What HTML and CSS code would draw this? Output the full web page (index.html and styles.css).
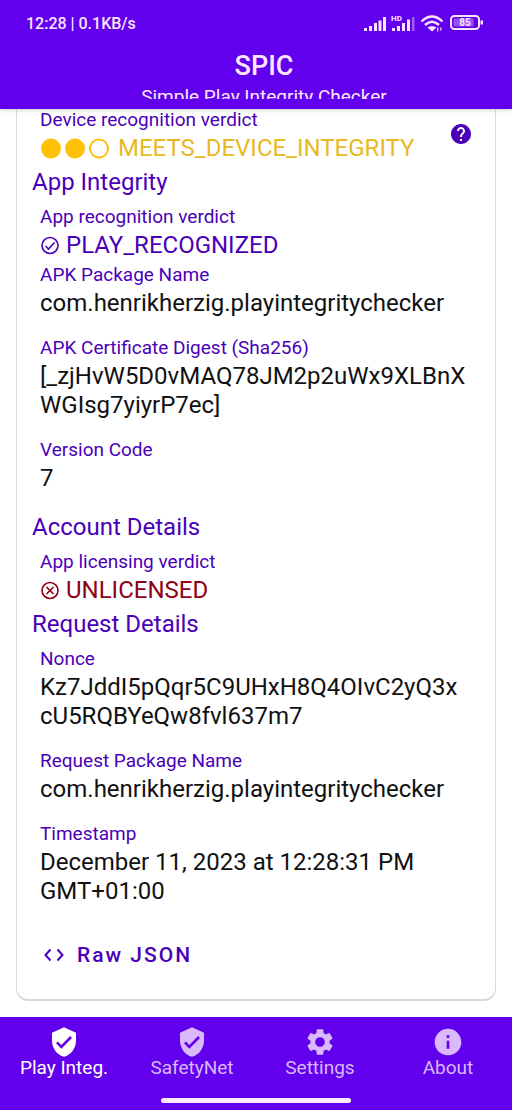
FILE: index.html
```html
<!DOCTYPE html>
<html lang="en">
<head>
<meta charset="utf-8">
<meta name="viewport" content="width=device-width, initial-scale=1">
<title>SPIC</title>
<link rel="stylesheet" href="styles.css">
</head>
<body>
<header class="top">
  <div class="status">
    <span>12:28 | 0.1KB/s</span>
    <svg class="status-icons" width="120" height="20" viewBox="0 0 120 20" fill="currentColor" role="img" aria-label="Signal, HD, Wi-Fi, battery 85%">
      <path d="M0 15h3v3h-3zM5 13h3v5h-3zM10 10h3v8h-3zM14.500 7.500h3v10.500h-3zM19 4h3v14h-3z"/>
      <path d="M28 15h3v3h-3zM33 13h3v5h-3zM38 10h3v8h-3zM43 6.500h3v11.500h-3z"/>
      <path d="M48 4h2.500v14h-2.500z" opacity=".4"/>
      <text x="27" y="8" font-size="8" font-weight="700">HD</text>
      <g fill="none" stroke="currentColor" stroke-width="2.400"><path d="M57.500 8.500q10.500-10 21 0M61 12q7-6.500 14 0"/></g>
      <path d="M63.500 14.500q4.500-3 9 0l-4.500 4z"/><path d="M73 14.500h1.500v4h-1.500zM76 14.500h1.500v3h-1.500z" opacity=".8"/>
      <rect x="87" y="3" width="28" height="13" rx="3.500" fill="none" stroke="currentColor" stroke-width="2"/>
      <rect x="89.500" y="5.500" width="20" height="8" rx="1" opacity=".35"/>
      <path d="M116.500 7.500h2.500v4h-2.500z"/>
      <text x="101" y="13" font-size="10" font-weight="700" text-anchor="middle">85</text>
    </svg>
  </div>
  <h1 class="title">SPIC</h1>
  <p class="subtitle">Simple Play Integrity Checker</p>
</header>

<main class="card">
  <section>
    <div class="with-help">
      <div>
        <h3 class="label">Device recognition verdict</h3>
        <p class="value verdict warn">
          <svg width="70" height="22" viewBox="0 0 70 22" aria-hidden="true"><g fill="#ffc107"><circle cx="11" cy="10.500" r="10"/><circle cx="35" cy="10.500" r="10"/></g><circle cx="59" cy="10.500" r="9" fill="none" stroke="#ffc107" stroke-width="2"/></svg>
          <span>MEETS_DEVICE_INTEGRITY</span>
        </p>
      </div>
      <button class="help" type="button" aria-label="Help">
        <svg width="24" height="24" viewBox="0 0 24 24" fill="currentColor"><path d="M12 2C6.480 2 2 6.480 2 12s4.480 10 10 10 10-4.480 10-10S17.520 2 12 2zm1 17h-2v-2h2v2zm2.070-7.750l-.9.920C13.450 12.900 13 13.500 13 15h-2v-.5c0-1.100.45-2.100 1.170-2.830l1.240-1.260c.37-.36.59-.86.59-1.410 0-1.100-.9-2-2-2s-2 .9-2 2H8c0-2.210 1.790-4 4-4s4 1.790 4 4c0 .88-.36 1.680-.93 2.250z"/></svg>
      </button>
    </div>
  </section>

  <section>
    <h2 class="heading">App Integrity</h2>
    <h3 class="label">App recognition verdict</h3>
    <p class="value verdict good">
      <svg width="20" height="20" viewBox="0 0 20 20" fill="none" stroke="currentColor" stroke-width="1.600" aria-hidden="true"><circle cx="10" cy="9.500" r="8"/><path d="M5.500 10l3 3 6-6.500"/></svg>
      <span>PLAY_RECOGNIZED</span>
    </p>
    <h3 class="label">APK Package Name</h3>
    <p class="value field">com.henrikherzig.playintegritychecker</p>
    <h3 class="label">APK Certificate Digest (Sha256)</h3>
    <p class="value field">[_zjHvW5D0vMAQ78JM2p2uWx9XLBnXWGIsg7yiyrP7ec]</p>
    <h3 class="label">Version Code</h3>
    <p class="value field">7</p>
  </section>

  <section>
    <h2 class="heading">Account Details</h2>
    <h3 class="label">App licensing verdict</h3>
    <p class="value verdict bad">
      <svg width="20" height="20" viewBox="0 0 20 20" fill="none" stroke="currentColor" stroke-width="1.600" aria-hidden="true"><circle cx="10" cy="9.500" r="8"/><path d="M6.500 6l7 7M13.500 6l-7 7"/></svg>
      <span>UNLICENSED</span>
    </p>
  </section>

  <section>
    <h2 class="heading">Request Details</h2>
    <h3 class="label">Nonce</h3>
    <p class="value field">Kz7JddI5pQqr5C9UHxH8Q4OIvC2yQ3xcU5RQBYeQw8fvl637m7</p>
    <h3 class="label">Request Package Name</h3>
    <p class="value field">com.henrikherzig.playintegritychecker</p>
    <h3 class="label">Timestamp</h3>
    <p class="value field">December 11, 2023 at 12:28:31 PM GMT+01:00</p>
  </section>

  <button class="raw" type="button">
    <svg width="24" height="24" viewBox="0 0 24 24" fill="none" stroke="currentColor" stroke-width="2" aria-hidden="true"><path d="M8.500 6.500L3.500 12l5 5.500M15.500 6.500l5 5.500-5 5.500"/></svg>
    Raw JSON
  </button>
</main>

<nav class="bottom">
  <div class="tabs">
    <a class="tab active" href="#play" aria-current="page">
      <svg width="32" height="32" viewBox="0 0 24 24" fill="currentColor" aria-hidden="true"><path d="M12 1L3 5v6c0 5.550 3.840 10.740 9 12 5.160-1.260 9-6.450 9-12V5l-9-4zm-2 16l-4-4 1.410-1.410L10 14.170l6.590-6.590L18 9l-8 8z"/></svg>
      <span>Play Integ.</span>
    </a>
    <a class="tab" href="#safetynet">
      <svg width="32" height="32" viewBox="0 0 24 24" fill="currentColor" aria-hidden="true"><path d="M12 1L3 5v6c0 5.550 3.840 10.740 9 12 5.160-1.260 9-6.450 9-12V5l-9-4zm-2 16l-4-4 1.410-1.410L10 14.170l6.590-6.590L18 9l-8 8z"/></svg>
      <span>SafetyNet</span>
    </a>
    <a class="tab" href="#settings">
      <svg width="32" height="32" viewBox="0 0 24 24" fill="currentColor" aria-hidden="true"><path d="M19.140 12.940c.04-.3.06-.61.06-.94 0-.32-.02-.64-.07-.94l2.030-1.580c.18-.14.23-.41.12-.61l-1.920-3.320c-.12-.22-.37-.29-.59-.22l-2.390.96c-.5-.38-1.030-.7-1.620-.94l-.36-2.540c-.04-.24-.24-.41-.48-.41h-3.840c-.24 0-.43.17-.47.41l-.36 2.540c-.59.24-1.130.57-1.620.94l-2.390-.96c-.22-.08-.47 0-.59.22L2.740 8.870c-.12.21-.08.47.12.61l2.030 1.580c-.05.3-.09.63-.09.94s.02.64.07.94l-2.030 1.580c-.18.14-.23.41-.12.61l1.920 3.320c.12.22.37.29.59.22l2.390-.96c.5.38 1.030.7 1.620.94l.36 2.540c.05.24.24.41.48.41h3.840c.24 0 .44-.17.47-.41l.36-2.540c.59-.24 1.130-.56 1.620-.94l2.390.96c.22.08.47 0 .59-.22l1.920-3.320c.12-.22.07-.47-.12-.61l-2.010-1.580zM12 15.600c-1.980 0-3.600-1.620-3.600-3.600s1.620-3.600 3.600-3.600 3.600 1.620 3.600 3.600-1.620 3.600-3.600 3.600z"/></svg>
      <span>Settings</span>
    </a>
    <a class="tab" href="#about">
      <svg width="32" height="32" viewBox="0 0 24 24" fill="currentColor" aria-hidden="true"><path d="M12 2C6.480 2 2 6.480 2 12s4.480 10 10 10 10-4.480 10-10S17.520 2 12 2zm1 15h-2v-6h2v6zm0-8h-2V7h2v2z"/></svg>
      <span>About</span>
    </a>
  </div>
  <div class="home-bar"></div>
</nav>
</body>
</html>
```
FILE: styles.css
```css
* {
  box-sizing: border-box;
}

body {
  margin: 0;
  min-height: 100vh;
  display: flex;
  flex-direction: column;
  background: #fff;
  color: #111;
  font-family: Roboto, "Noto Sans", sans-serif;
}

h1, h2, h3, p {
  margin: 0;
  font-weight: 400;
}

svg {
  display: block;
  flex: none;
}

button {
  padding: 0;
  border: 0;
  background: none;
  color: #4a00b8;
  font: inherit;
  cursor: pointer;
}

.top {
  position: relative;
  z-index: 1;
  padding-bottom: 10px;
  background: #6200ee;
  color: #fbe6ff;
  text-align: center;
  box-shadow: 0 1px 4px rgba(0, 0, 0, 0.2);
}

.status {
  display: flex;
  justify-content: space-between;
  align-items: center;
  height: 46px;
  padding: 0 28px 0 26px;
  font-size: 16px;
  font-weight: 500;
}

.title {
  font-size: 27px;
  font-weight: 500;
  line-height: 40px;
  padding-left: 16px;
}

.subtitle {
  height: 13px;
  padding-left: 16px;
  overflow: hidden;
  font-size: 19px;
  line-height: 21px;
}

.card {
  margin: -5px 16px 16px;
  padding: 0 15px 20px;
  border: 1px solid #d8d8d8;
  border-bottom-width: 2px;
  border-radius: 0 0 12px 12px;
}

.heading {
  color: #4a00b8;
  font-size: 24px;
  line-height: 39px;
}

.label {
  padding-left: 8px;
  color: #4a00b8;
  font-size: 19px;
  line-height: 29px;
}

.value {
  padding: 0 12px 0 8px;
  font-size: 24px;
  line-height: 29px;
  overflow-wrap: anywhere;
}

.field {
  margin-bottom: 15px;
}

.verdict {
  display: flex;
  align-items: center;
  gap: 6px;
}

.warn {
  color: #e8b923;
}

.warn svg {
  margin-right: 2px;
}

.good {
  color: #4a00b8;
}

.bad {
  color: #8e0012;
}

.with-help {
  display: flex;
  justify-content: space-between;
  align-items: center;
}

.help {
  margin-right: 7px;
}

.raw {
  display: flex;
  align-items: center;
  gap: 11px;
  height: 48px;
  margin: 25px 0 0 10px;
  font-size: 21px;
  font-weight: 500;
  letter-spacing: 2px;
}

.bottom {
  margin-top: auto;
  padding: 9px 0 8px;
  background: #6200ee;
}

.tabs {
  display: grid;
  grid-template-columns: repeat(4, 1fr);
}

.tab {
  display: flex;
  flex-direction: column;
  align-items: center;
  color: #d9b8fb;
  font-size: 19px;
  line-height: 20px;
  text-decoration: none;
}

.active {
  color: #fff;
}

.home-bar {
  width: 37%;
  height: 5px;
  margin: 20px auto 0;
  border-radius: 3px;
  background: #fdeaff;
}
```
